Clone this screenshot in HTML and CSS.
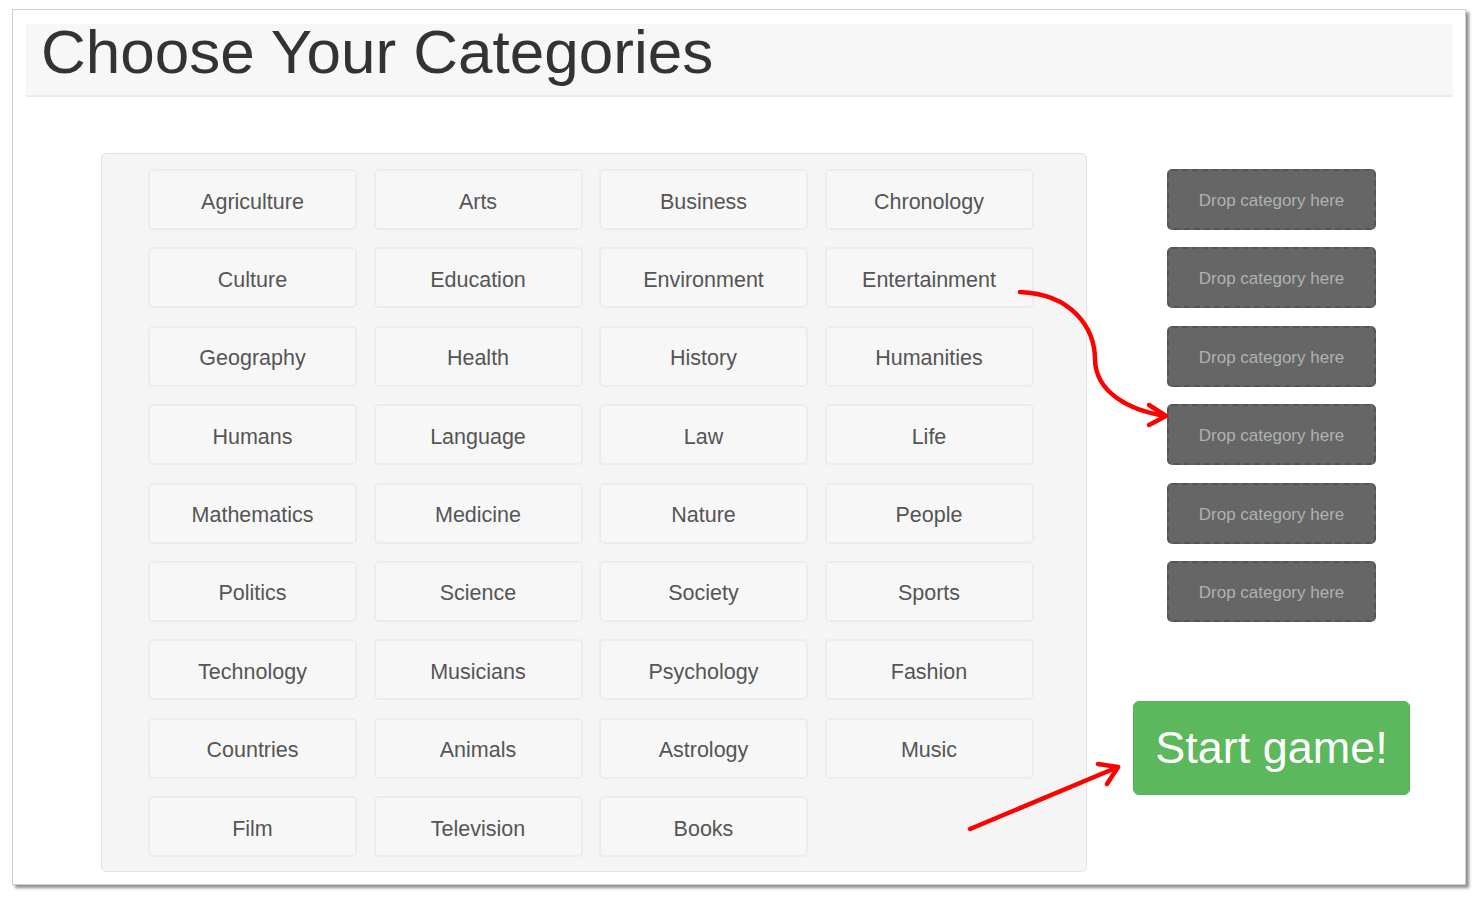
FILE: index.html
```html
<!DOCTYPE html>
<html lang="en">
<head>
<meta charset="utf-8">
<title>Choose Your Categories</title>
<link rel="stylesheet" href="styles.css">
</head>
<body>
<div class="window">
  <header class="page-header">
    <h1 class="title">Choose Your Categories</h1>
  </header>
  <main class="main">
    <section class="panel">
      <div class="grid">
        <div class="cat">Agriculture</div>
        <div class="cat">Arts</div>
        <div class="cat">Business</div>
        <div class="cat">Chronology</div>
        <div class="cat">Culture</div>
        <div class="cat">Education</div>
        <div class="cat">Environment</div>
        <div class="cat">Entertainment</div>
        <div class="cat">Geography</div>
        <div class="cat">Health</div>
        <div class="cat">History</div>
        <div class="cat">Humanities</div>
        <div class="cat">Humans</div>
        <div class="cat">Language</div>
        <div class="cat">Law</div>
        <div class="cat">Life</div>
        <div class="cat">Mathematics</div>
        <div class="cat">Medicine</div>
        <div class="cat">Nature</div>
        <div class="cat">People</div>
        <div class="cat">Politics</div>
        <div class="cat">Science</div>
        <div class="cat">Society</div>
        <div class="cat">Sports</div>
        <div class="cat">Technology</div>
        <div class="cat">Musicians</div>
        <div class="cat">Psychology</div>
        <div class="cat">Fashion</div>
        <div class="cat">Countries</div>
        <div class="cat">Animals</div>
        <div class="cat">Astrology</div>
        <div class="cat">Music</div>
        <div class="cat">Film</div>
        <div class="cat">Television</div>
        <div class="cat">Books</div>
      </div>
    </section>
    <aside class="side">
      <div class="drops">
        <div class="drop">Drop category here</div>
        <div class="drop">Drop category here</div>
        <div class="drop">Drop category here</div>
        <div class="drop">Drop category here</div>
        <div class="drop">Drop category here</div>
        <div class="drop">Drop category here</div>
      </div>
      <button class="start" type="button">Start game!</button>
    </aside>
  </main>
  <svg class="arrows" width="1479" height="902" viewBox="0 0 1479 902" aria-hidden="true">
    <g fill="none" stroke="#f00" stroke-width="4.5" stroke-linecap="round" stroke-linejoin="round">
      <path d="M1020 292 C1072 294 1095 328 1095 360 C1096 392 1128 410 1165 416"/>
      <path d="M1149 405 L1166 416 L1149 425"/>
      <path d="M970 829 L1118 767"/>
      <path d="M1098 764 L1118 767 L1107 784"/>
    </g>
  </svg>
</div>
</body>
</html>
```

FILE: styles.css
```css
html, body {
  margin: 0;
  padding: 0;
  background: #ffffff;
}

body {
  font-family: "Liberation Sans", Arial, sans-serif;
  width: 1479px;
  height: 902px;
  overflow: hidden;
}

.window {
  position: relative;
  box-sizing: border-box;
  margin: 9px 0 0 12px;
  width: 1454px;
  height: 876px;
  padding: 14px 12px 0 13px;
  background: #fff;
  border: 1px solid #cfcfcf;
  box-shadow: 3px 3px 3px rgba(0, 0, 0, 0.45);
}

.page-header {
  box-sizing: border-box;
  height: 73px;
  background: #f7f7f7;
  border-bottom: 2px solid #ebebeb;
  padding-left: 15px;
}

.title {
  margin: 0;
  font-weight: normal;
  font-size: 62px;
  line-height: 56px;
  color: #333;
}

.main {
  display: flex;
  align-items: flex-start;
  margin-top: 56px;
  margin-left: 75px;
}

.panel {
  box-sizing: border-box;
  width: 986px;
  height: 719px;
  padding: 15px 0 0 46px;
  background: #f5f5f5;
  border: 1px solid #e4e4e4;
  border-radius: 5px;
}

.grid {
  display: grid;
  grid-template-columns: repeat(4, 209px);
  grid-auto-rows: 61px;
  column-gap: 16.5px;
  row-gap: 17.4px;
}

.cat {
  box-sizing: border-box;
  display: flex;
  align-items: center;
  justify-content: center;
  padding-top: 5px;
  background: #f7f7f7;
  border: 2px solid #ececec;
  border-radius: 5px;
  font-size: 21.5px;
  color: #555;
}

.side {
  display: flex;
  flex-direction: column;
  align-items: center;
  width: 277px;
  margin-left: 46px;
  padding-top: 16px;
}

.drops {
  display: flex;
  flex-direction: column;
  gap: 17.4px;
}

.drop {
  box-sizing: border-box;
  width: 209px;
  height: 61px;
  display: flex;
  align-items: center;
  justify-content: center;
  padding-top: 3px;
  background: #666;
  border: 2px dashed #555;
  border-radius: 5px;
  font-size: 17px;
  color: #adb2b2;
}

.start {
  box-sizing: border-box;
  margin-top: 79px;
  width: 277px;
  height: 94px;
  padding: 0;
  background: #5cb85c;
  border: 1px solid #54b054;
  border-radius: 6px;
  font-family: "Liberation Sans", Arial, sans-serif;
  font-size: 45px;
  color: #fff;
  cursor: pointer;
}

.arrows {
  position: absolute;
  left: -13px;
  top: -10px;
  pointer-events: none;
}
```
